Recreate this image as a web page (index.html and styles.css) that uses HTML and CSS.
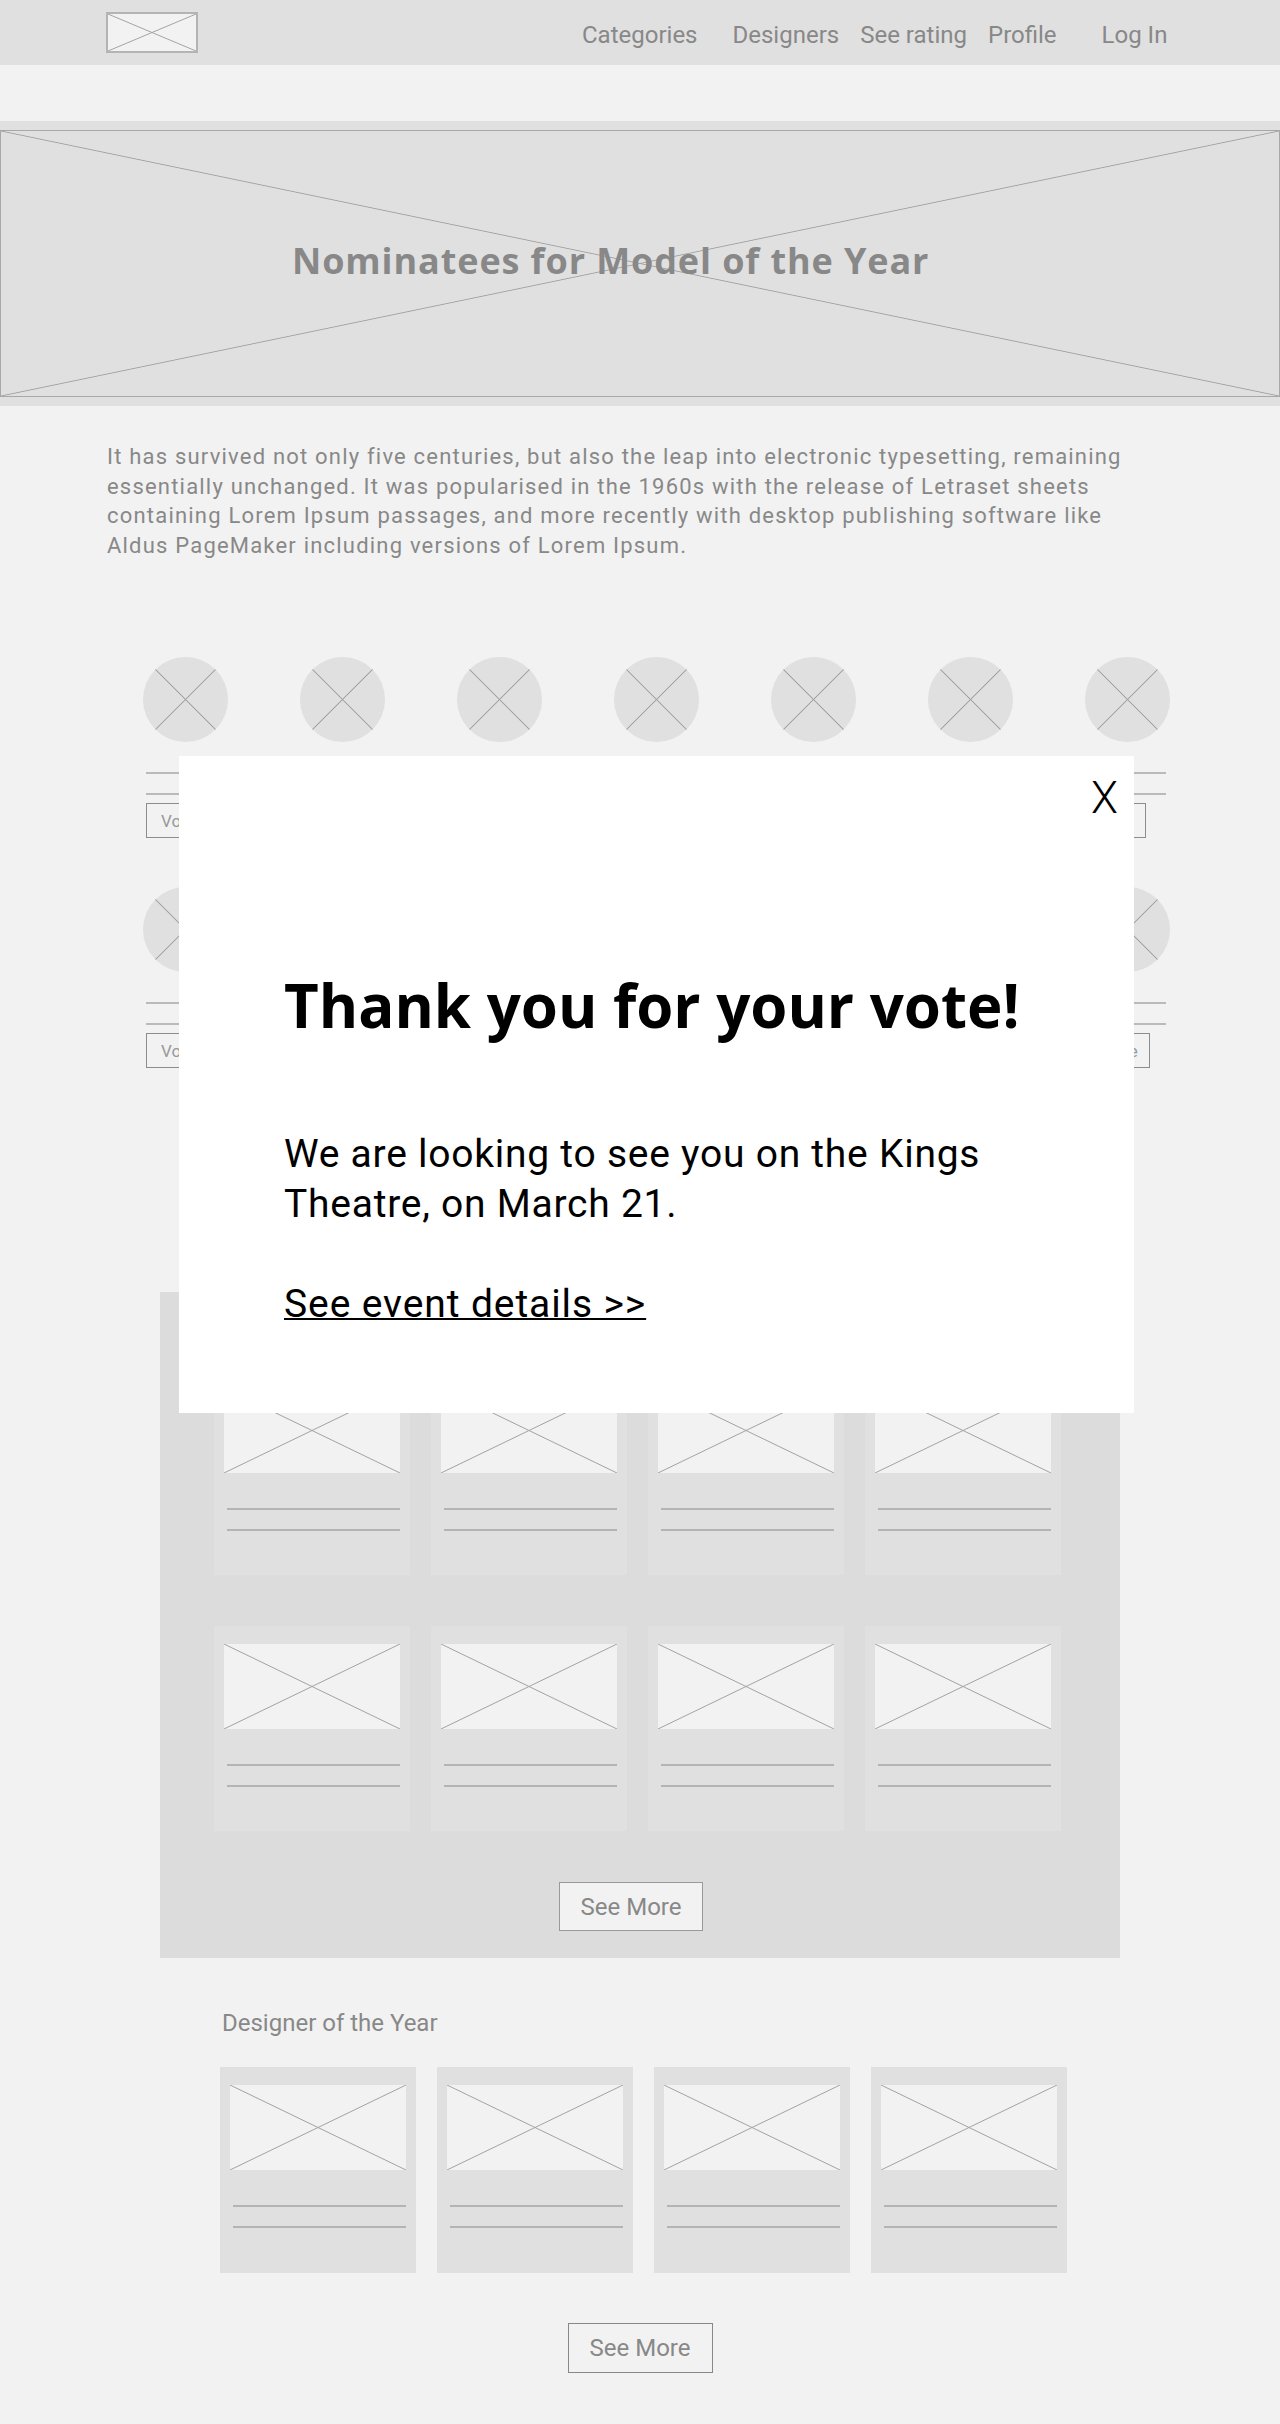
FILE: index.html
```html
<!DOCTYPE html>
<html lang="en">
<head>
<meta charset="utf-8">
<title>Nominatees for Model of the Year</title>
<link rel="stylesheet" href="styles.css">
</head>
<body>
<div class="page">
  <header class="topbar">
    <div class="logo xph"></div>
    <nav class="nav">
      <a class="nav-item">Categories</a>
      <a class="nav-item nav-designers">Designers</a>
      <a class="nav-item nav-rating">See rating</a>
      <a class="nav-item nav-profile">Profile</a>
      <a class="nav-item nav-login">Log In</a>
    </nav>
  </header>

  <section class="hero">
    <div class="hero-box xph">
      <h1 class="hero-title">Nominatees for Model of the Year</h1>
    </div>
  </section>

  <p class="intro">It has survived not only five centuries, but also the leap into electronic typesetting, remaining essentially unchanged. It was popularised in the 1960s with the release of Letraset sheets containing Lorem Ipsum passages, and more recently with desktop publishing software like Aldus PageMaker including versions of Lorem Ipsum.</p>

  <section class="nominees">
    <div class="nominee"><div class="avatar xph"></div><div class="bar"></div><div class="bar bar-2"></div><button class="vote">Vote</button></div>
    <div class="nominee"><div class="avatar xph"></div><div class="bar"></div><div class="bar bar-2"></div><button class="vote" aria-label="Vote"></button></div>
    <div class="nominee"><div class="avatar xph"></div><div class="bar"></div><div class="bar bar-2"></div><button class="vote" aria-label="Vote"></button></div>
    <div class="nominee"><div class="avatar xph"></div><div class="bar"></div><div class="bar bar-2"></div><button class="vote" aria-label="Vote"></button></div>
    <div class="nominee"><div class="avatar xph"></div><div class="bar"></div><div class="bar bar-2"></div><button class="vote" aria-label="Vote"></button></div>
    <div class="nominee"><div class="avatar xph"></div><div class="bar"></div><div class="bar bar-2"></div><button class="vote" aria-label="Vote"></button></div>
    <div class="nominee"><div class="avatar xph"></div><div class="bar"></div><div class="bar bar-2"></div><button class="vote" aria-label="Vote"></button></div>
    <div class="nominee"><div class="avatar xph"></div><div class="bar"></div><div class="bar bar-2"></div><button class="vote">Vote</button></div>
    <div class="nominee"><div class="avatar xph"></div><div class="bar"></div><div class="bar bar-2"></div><button class="vote" aria-label="Vote"></button></div>
    <div class="nominee"><div class="avatar xph"></div><div class="bar"></div><div class="bar bar-2"></div><button class="vote" aria-label="Vote"></button></div>
    <div class="nominee"><div class="avatar xph"></div><div class="bar"></div><div class="bar bar-2"></div><button class="vote" aria-label="Vote"></button></div>
    <div class="nominee"><div class="avatar xph"></div><div class="bar"></div><div class="bar bar-2"></div><button class="vote" aria-label="Vote"></button></div>
    <div class="nominee"><div class="avatar xph"></div><div class="bar"></div><div class="bar bar-2"></div><button class="vote" aria-label="Vote"></button></div>
    <div class="nominee"><div class="avatar xph"></div><div class="bar"></div><div class="bar bar-2"></div><button class="vote vote-wide">Vote</button></div>
  </section>

  <section class="panel">
    <div class="cards">
      <div class="card"><div class="card-img xph"></div><div class="card-line"></div><div class="card-line card-line-2"></div></div>
      <div class="card"><div class="card-img xph"></div><div class="card-line"></div><div class="card-line card-line-2"></div></div>
      <div class="card"><div class="card-img xph"></div><div class="card-line"></div><div class="card-line card-line-2"></div></div>
      <div class="card"><div class="card-img xph"></div><div class="card-line"></div><div class="card-line card-line-2"></div></div>
    </div>
    <div class="cards">
      <div class="card"><div class="card-img xph"></div><div class="card-line"></div><div class="card-line card-line-2"></div></div>
      <div class="card"><div class="card-img xph"></div><div class="card-line"></div><div class="card-line card-line-2"></div></div>
      <div class="card"><div class="card-img xph"></div><div class="card-line"></div><div class="card-line card-line-2"></div></div>
      <div class="card"><div class="card-img xph"></div><div class="card-line"></div><div class="card-line card-line-2"></div></div>
    </div>
    <button class="see-more see-more-panel">See More</button>
  </section>

  <section class="designers">
    <h2 class="section-label">Designer of the Year</h2>
    <div class="cards">
      <div class="card"><div class="card-img xph"></div><div class="card-line"></div><div class="card-line card-line-2"></div></div>
      <div class="card"><div class="card-img xph"></div><div class="card-line"></div><div class="card-line card-line-2"></div></div>
      <div class="card"><div class="card-img xph"></div><div class="card-line"></div><div class="card-line card-line-2"></div></div>
      <div class="card"><div class="card-img xph"></div><div class="card-line"></div><div class="card-line card-line-2"></div></div>
    </div>
    <button class="see-more see-more-page">See More</button>
  </section>

  <div class="modal">
    <button class="modal-close">X</button>
    <h2 class="modal-title">Thank you for your vote!</h2>
    <p class="modal-text">We are looking to see you on the Kings Theatre, on March 21.</p>
    <a class="modal-link">See event details &gt;&gt;</a>
  </div>
</div>
</body>
</html>
```

FILE: styles.css
```css
* { box-sizing: border-box; }
html, body { margin: 0; padding: 0; }
body {
  background: #f2f2f2;
  font-family: Roboto, "Liberation Sans", Arial, sans-serif;
  color: #888;
}
.page {
  position: relative;
  width: 1280px;
  height: 2424px;
  overflow: hidden;
}

/* wireframe image placeholder: X across the box */
.xph {
  background-image:
    linear-gradient(to top right, transparent calc(50% - 0.9px), #a2a2a2 50%, transparent calc(50% + 0.9px)),
    linear-gradient(to bottom right, transparent calc(50% - 0.9px), #a2a2a2 50%, transparent calc(50% + 0.9px));
}

/* header */
.topbar {
  display: flex;
  align-items: flex-start;
  height: 65px;
  background: #e0e0e0;
}
.logo {
  margin: 12px 0 0 106px;
  width: 92px;
  height: 41px;
  border: 2px solid #b4b4b4;
  background-color: #f2f2f2;
}
.nav {
  display: flex;
  margin: 21px 0 0 384px;
  font-size: 24px;
  line-height: 28px;
}
.nav-item { color: #888; text-decoration: none; }
.nav-designers { margin-left: 35px; }
.nav-rating { margin-left: 21px; }
.nav-profile { margin-left: 21px; }
.nav-login { margin-left: 45px; }

/* hero */
.hero {
  margin-top: 56px;
  padding: 9px 0;
  background: #e0e0e0;
}
.hero-box {
  display: flex;
  align-items: center;
  height: 267px;
  padding: 0 0 6px 291px;
  border: 1px solid #a8a8a8;
  background-color: #e0e0e0;
}
.hero-title {
  margin: 0;
  font-family: "Open Sans", "DejaVu Sans", sans-serif;
  font-weight: 700;
  font-size: 36px;
  line-height: 36px;
  letter-spacing: 0.9px;
  color: #888;
}

/* intro */
.intro {
  margin: 36px 0 0 107px;
  width: 1045px;
  font-size: 22px;
  line-height: 29.5px;
  letter-spacing: 1.2px;
  color: #888;
}

/* nominees */
.nominees {
  display: grid;
  grid-template-columns: repeat(7, 85px);
  column-gap: 72px;
  row-gap: 49px;
  margin: 97px 0 0 143px;
}
.nominee { display: flex; flex-direction: column; align-items: flex-start; }
.avatar {
  width: 85px;
  height: 85px;
  border-radius: 50%;
  background-color: #e0e0e0;
}
.bar {
  width: 78px;
  height: 2px;
  margin: 30px 0 0 3px;
  background: #bababa;
}
.bar-2 { margin-top: 19px; }
.vote {
  margin: 8px 0 0 3px;
  width: 58px;
  height: 35px;
  padding: 0 0 0 14px;
  border: 1px solid #8c8c8c;
  background: transparent;
  font-family: Roboto, sans-serif;
  font-size: 17px;
  line-height: 20px;
  color: #999;
  text-align: left;
  white-space: nowrap;
  overflow: hidden;
}
.vote-wide { width: 62px; }

/* grey panel with cards */
.panel {
  margin: 224px 0 0 160px;
  width: 960px;
  height: 666px;
  padding: 78px 0 0 54px;
  background: #dcdcdc;
}
.cards { display: flex; gap: 21px; }
.cards + .cards { margin-top: 51px; }
.card {
  width: 196px;
  height: 205px;
  padding: 18px 10px 0;
  background: #e0e0e0;
}
.card-img { height: 85px; background-color: #f2f2f2; }
.card-line {
  height: 2px;
  margin: 35px 0 0 3px;
  background: #b4b4b4;
}
.card-line-2 { margin-top: 19px; }

.see-more {
  display: block;
  height: 49px;
  padding: 0;
  font-family: Roboto, sans-serif;
  font-size: 24px;
  color: #888;
  cursor: pointer;
}
.see-more-panel {
  margin: 51px 0 0 345px;
  width: 144px;
  border: 1px solid #999;
  background: #f2f2f2;
}

/* designers of the year */
.designers { margin-top: 51px; }
.section-label {
  margin: 0 0 0 222px;
  font-weight: 400;
  font-size: 24px;
  line-height: 28px;
  color: #888;
}
.designers .cards { margin: 30px 0 0 220px; }
.designers .card { height: 206px; }
.see-more-page {
  margin: 50px auto 0;
  width: 145px;
  height: 50px;
  border: 1px solid #888;
  background: transparent;
}

/* modal */
.modal {
  position: absolute;
  left: 179px;
  top: 756px;
  width: 955px;
  height: 657px;
  padding: 221px 0 0 105px;
  background: #fff;
  color: #000;
}
.modal-close {
  position: absolute;
  top: 26px;
  right: 16px;
  padding: 0;
  border: 0;
  background: none;
  font-family: Roboto, sans-serif;
  font-weight: 300;
  font-size: 44px;
  line-height: 32px;
  color: #000;
}
.modal-title {
  margin: 0;
  font-family: "Open Sans", "DejaVu Sans", sans-serif;
  font-weight: 700;
  font-size: 60px;
  line-height: 56px;
}
.modal-text {
  margin: 96px 0 0;
  width: 760px;
  font-size: 39px;
  line-height: 50px;
  letter-spacing: 0.75px;
}
.modal-link {
  display: inline-block;
  margin-top: 50px;
  font-size: 39px;
  line-height: 50px;
  letter-spacing: 0.9px;
  color: #000;
  text-decoration: underline;
  text-decoration-thickness: 2px;
}
```
